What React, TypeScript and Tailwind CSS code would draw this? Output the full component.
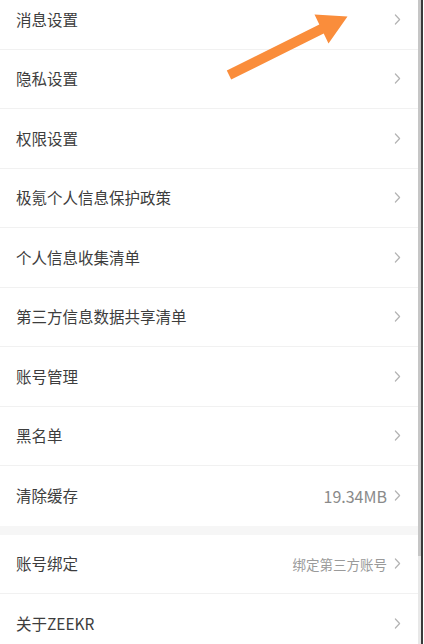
import React from "react";

const font = { fontFamily: '"Noto Sans CJK SC", "Noto Sans", sans-serif' };

function Chevron() {
  return (
    <svg width="7" height="11" viewBox="0 0 7 11" className="shrink-0">
      <path d="M1.4 1 L5.6 5.5 L1.4 10" fill="none" stroke="#b3b3b3" strokeWidth="1.2" strokeLinecap="round" strokeLinejoin="round" />
    </svg>
  );
}

function Row({ label, value, small, last }: { label: string; value?: string; small?: boolean; last?: boolean }) {
  return (
    <div className={`flex h-[59.5px] items-center pl-4 pr-[17px] ${last ? "" : "border-b border-[#f1f1f1]"}`}>
      <span className="flex-1 text-[15.5px] text-[#3d3d3d]">{label}</span>
      {value && (
        <span className={`mr-[7px] ${small ? "text-[13.5px] text-[#9a9a9a]" : "text-[16px] text-[#8a8a8a]"}`}>{value}</span>
      )}
      <Chevron />
    </div>
  );
}

export default function App() {
  const group1 = [
    "消息设置",
    "隐私设置",
    "权限设置",
    "极氪个人信息保护政策",
    "个人信息收集清单",
    "第三方信息数据共享清单",
    "账号管理",
    "黑名单",
  ];
  return (
    <div className="flex h-[644px] w-[424px] overflow-hidden bg-white" style={font}>
      <div className="relative flex-1 overflow-hidden">
        <div className="mt-[-10px]">
          {group1.map((l) => (
            <Row key={l} label={l} />
          ))}
          <Row label="清除缓存" value="19.34MB" last />
          <div className="h-[9px] bg-[#f6f6f6]" />
          <Row label="账号绑定" value="绑定第三方账号" small />
          <Row label="关于ZEEKR" last />
        </div>
        <svg className="pointer-events-none absolute left-0 top-0" width="418" height="100" viewBox="0 0 418 100">
          <polygon
            points="226.8,70.5 319.3,24.5 314.5,14.5 347.5,16.5 328.5,43.5 323.7,33.5 231.2,79.5"
            fill="#fa8d3b"
          />
        </svg>
      </div>
      <div className="flex w-[3px] flex-col bg-[#e8e8e8]">
        <div className="h-[556px] bg-[#c6c6c6]" />
      </div>
      <div className="w-[2px] bg-[#3a3a3a]" />
      <div className="w-[1px] bg-white" />
    </div>
  );
}
